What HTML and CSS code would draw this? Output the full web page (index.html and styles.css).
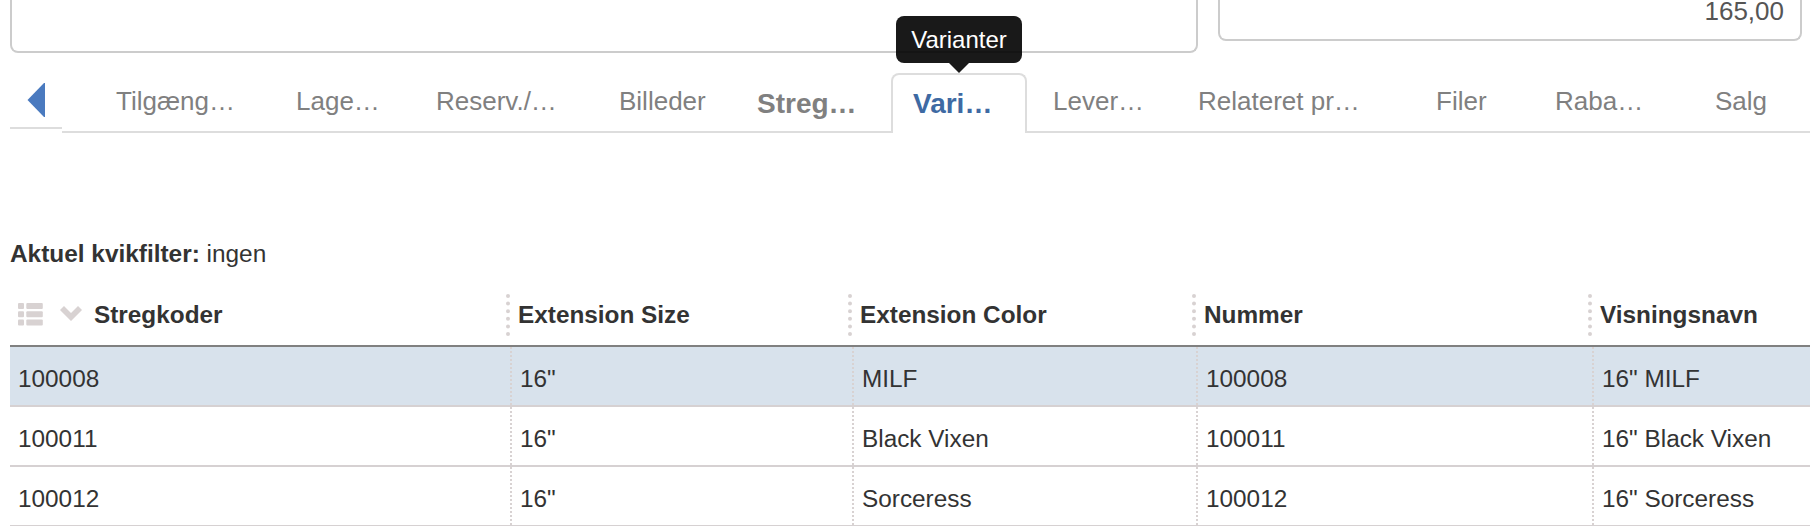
FILE: index.html
```html
<!DOCTYPE html>
<html lang="da">
<head>
  <meta charset="UTF-8" />
  <meta name="viewport" content="width=device-width, initial-scale=1.0" />
  <title>Varianter</title>
  <link rel="stylesheet" href="styles.css">
</head>
<body>
  <div class="fields">
    <div class="field field-text"></div>
    <div class="field field-price"><span>165,00</span></div>
  </div>

  <nav class="tab-bar">
    <button class="scroll-left" aria-label="Forrige">
      <svg width="18" height="34" viewBox="0 0 18 34"><path d="M17 0h1v34h-1L0.5 17z" fill="#4a7abf"/></svg>
    </button>
    <div class="tabs">
      <a class="tab"><span>Tilgæng…</span></a>
      <a class="tab"><span>Lage…</span></a>
      <a class="tab"><span>Reserv./…</span></a>
      <a class="tab"><span>Billeder</span></a>
      <a class="tab bold"><span>Streg…</span></a>
      <a class="tab bold active"><span>Vari…</span><div class="tooltip">Varianter</div></a>
      <a class="tab"><span>Lever…</span></a>
      <a class="tab"><span>Relateret pr…</span></a>
      <a class="tab"><span>Filer</span></a>
      <a class="tab"><span>Raba…</span></a>
      <a class="tab"><span>Salg</span></a>
    </div>
  </nav>

  <p class="filter"><b>Aktuel kvikfilter:</b> ingen</p>

  <div class="list">
    <div class="list-head">
      <div class="head-cell">
        <svg class="icon-list" width="25" height="23" viewBox="0 0 25 23" fill="#d8d2d2">
          <rect x="0" y="0" width="6" height="6" rx="1"/><rect x="8.3" y="0" width="16.5" height="6" rx="1"/>
          <rect x="0" y="8.3" width="6" height="6" rx="1"/><rect x="8.3" y="8.3" width="16.5" height="6" rx="1"/>
          <rect x="0" y="16.5" width="6" height="6" rx="1"/><rect x="8.3" y="16.5" width="16.5" height="6" rx="1"/>
        </svg>
        <svg class="icon-chevron" width="22" height="15" viewBox="0 0 22 15"><path d="M0 4L4 0l7 7 7-7 4 4-11 11z" fill="#d8d2d2"/></svg>
        <span>Stregkoder</span>
        <svg class="grip" width="4" height="42" viewBox="0 0 4 42"><path d="M2 2v38.1"/></svg>
      </div>
      <div class="head-cell"><span>Extension Size</span><svg class="grip" width="4" height="42" viewBox="0 0 4 42"><path d="M2 2v38.1"/></svg></div>
      <div class="head-cell"><span>Extension Color</span><svg class="grip" width="4" height="42" viewBox="0 0 4 42"><path d="M2 2v38.1"/></svg></div>
      <div class="head-cell"><span>Nummer</span><svg class="grip" width="4" height="42" viewBox="0 0 4 42"><path d="M2 2v38.1"/></svg></div>
      <div class="head-cell"><span>Visningsnavn</span></div>
    </div>
    <div class="row selected">
      <div>100008</div><div>16"</div><div>MILF</div><div>100008</div><div>16" MILF</div>
    </div>
    <div class="row">
      <div>100011</div><div>16"</div><div>Black Vixen</div><div>100011</div><div>16" Black Vixen</div>
    </div>
    <div class="row">
      <div>100012</div><div>16"</div><div>Sorceress</div><div>100012</div><div>16" Sorceress</div>
    </div>
  </div>
</body>
</html>
```
FILE: styles.css
```css
* {
  box-sizing: border-box;
}
body {
  margin: 0;
  padding-left: 10px;
  height: 526px;
  overflow: hidden;
  background-color: #fff;
  color: #333;
  font-family: "Liberation Sans", Arial, sans-serif;
  font-size: 24.35px;
}

/* Felter øverst */
.fields {
  display: flex;
  align-items: flex-start;
  gap: 20px;
  height: 73px;
}
.field {
  border: 2px solid #ccc;
  border-top: none;
  border-radius: 0 0 8px 8px;
}
.field-text {
  width: 1188px;
  height: 53px;
}
.field-price {
  width: 584px;
  height: 41px;
  padding-right: 16px;
  text-align: right;
  font-size: 26px;
  line-height: 22px;
  color: #555;
}

/* Faner */
.tab-bar {
  display: flex;
  align-items: flex-start;
}
.scroll-left {
  display: flex;
  align-items: flex-start;
  width: 52px;
  height: 56px;
  padding: 10px 0 0 17px;
  border: none;
  border-bottom: 2px solid #ddd;
  background: none;
}
.tabs {
  flex: 1;
  display: grid;
  grid-template-columns: 180px 140px 183px 138px 134px 136px 171px 238px 119px 160px 1fr;
  height: 60px;
  padding-left: 54px;
  background: linear-gradient(#ddd, #ddd) bottom / 100% 2px no-repeat;
}
.tab {
  position: relative;
  font-size: 26px;
  line-height: 30px;
  padding-top: 13px;
  color: #808080;
  white-space: nowrap;
}
.tab.bold {
  font-size: 28px;
  font-weight: bold;
  padding-top: 16px;
}
.tab.active {
  padding: 14px 0 0 20px;
  border: 2px solid #ddd;
  border-bottom: none;
  border-radius: 8px 8px 0 0;
  background-color: #fff;
  color: #3e6aa3;
}
.tab.active + .tab {
  padding-left: 26px;
}
.tooltip {
  position: absolute;
  left: 3px;
  bottom: 70px;
  width: 126px;
  height: 47px;
  border-radius: 8px;
  background-color: rgba(0, 0, 0, 0.9);
  color: #fff;
  font-size: 24px;
  font-weight: normal;
  line-height: 47px;
  text-align: center;
}
.tooltip::after {
  content: "";
  position: absolute;
  top: 47px;
  left: 53px;
  border: 10px solid transparent;
  border-top-color: rgba(0, 0, 0, 0.9);
  border-bottom: none;
}

.filter {
  margin: 107px 0 0;
  font-size: 24.4px;
  line-height: 28px;
}

/* Liste */
.list {
  margin-top: 13px;
}
.list-head {
  display: grid;
  grid-template-columns: 500px 342px 344px 396px 1fr;
  height: 66px;
  padding-top: 3px;
  border-bottom: 2px solid #808080;
  font-weight: bold;
}
.head-cell {
  display: flex;
  align-items: center;
  padding-left: 8px;
}
.icon-list {
  margin-right: 16px;
}
.icon-chevron {
  margin: 0 12px 3px 1px;
}
.grip {
  margin-left: auto;
  stroke: #d8d2d2;
  stroke-width: 4;
  stroke-linecap: round;
  stroke-dasharray: 0 7.6;
}
.row {
  display: grid;
  grid-template-columns: 502px 342px 344px 396px 1fr;
  height: 60px;
  border-bottom: 2px solid #d6d1d2;
  line-height: 64px;
}
.row div {
  height: 58px;
  padding-left: 8px;
  border-right: 2px dotted #d8d2d2;
}
.row div:last-child {
  border-right: none;
}
.selected {
  background-color: #d8e2ec;
}
```
